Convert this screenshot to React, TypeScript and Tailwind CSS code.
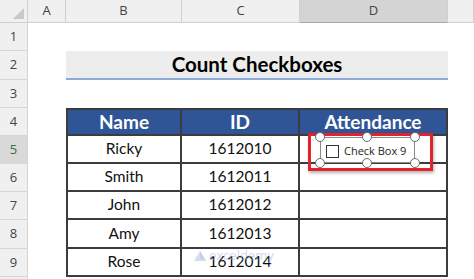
import React from 'react';

const people: [string, string][] = [
  ['Ricky', '1612010'],
  ['Smith', '1612011'],
  ['John', '1612012'],
  ['Amy', '1612013'],
  ['Rose', '1612014'],
];

const rowHead = 'flex items-center justify-center bg-[#f0f0f0] border-r border-b border-[#d6d6d6] text-[13px] text-[#444] font-["Open_Sans",sans-serif]';
const colHead = 'flex items-center justify-center bg-[#f0f0f0] border-r border-b border-[#d0d0d0] text-[13px] text-[#444] font-["Open_Sans",sans-serif]';
const cell = 'flex items-center justify-center border-r-2 border-b-2 border-[#3c3c3c] text-[15.5px] text-[#111]';
const head = 'bg-[#2f5597] text-white font-bold text-[19px] border-t-2';

const RowHeader: React.FC<{ n?: number; active?: boolean }> = ({ n, active }) => (
  <div className={active ? `${rowHead} !bg-[#d9d9d9] !text-[#3b6d4c]` : rowHead}>{n}</div>
);

const Handle: React.FC<{ x: number; y: number }> = ({ x, y }) => (
  <div
    className="absolute w-[10px] h-[10px] -ml-[5px] -mt-[5px] rounded-full border border-[#6a6a6a] bg-white"
    style={{ left: x, top: y }}
  />
);

export default function App() {
  return (
    <div className="relative w-[474px] h-[279px] overflow-hidden bg-white font-['Lato',sans-serif]">
      <div className="grid grid-cols-[28px_38px_116px_118px_148px_1fr] grid-rows-[23px_28px_29px_28px_28px_28px_28px_28px_29px_28px_28px]">
        {/* column headers */}
        <div className="relative bg-[#f0f0f0] border-r border-b border-[#d0d0d0]">
          <div className="absolute right-[3px] bottom-[3px] w-0 h-0 border-l-[11px] border-l-transparent border-b-[11px] border-b-[#c8c8c8]" />
        </div>
        <div className={colHead}>A</div>
        <div className={colHead}>B</div>
        <div className={colHead}>C</div>
        <div className={`${colHead} !bg-[#d4d4d4] !border-b-[#a8a8a8]`}>D</div>
        <div className={colHead}></div>

        {/* row 1 */}
        <RowHeader n={1} />
        <div className="col-span-5" />

        {/* row 2 */}
        <RowHeader n={2} />
        <div />
        <div className="col-span-3 flex items-center justify-center bg-[#ededed] border-b-2 border-[#8eaadb] text-[20.5px] font-bold text-black">
          Count Checkboxes
        </div>
        <div />

        {/* row 3 */}
        <RowHeader n={3} />
        <div className="col-span-5" />

        {/* row 4 */}
        <RowHeader n={4} />
        <div />
        <div className={`${cell} border-l-2 ${head}`}>Name</div>
        <div className={`${cell} ${head}`}>ID</div>
        <div className={`${cell} ${head}`}>Attendance</div>
        <div />

        {people.map(([name, id], i) => (
          <React.Fragment key={id}>
            <RowHeader n={i + 5} active={i === 0} />
            <div />
            <div className={`${cell} border-l-2`}>{name}</div>
            <div className={cell}>{id}</div>
            <div className={cell} />
            <div />
          </React.Fragment>
        ))}

        {/* row 10, only its top edge is in view */}
        <RowHeader />
        <div className="col-span-5" />
      </div>

      {/* watermark */}
      <div className="absolute left-[193px] top-[249px] flex items-center gap-[2px] opacity-50 pointer-events-none">
        <svg width="14" height="12" viewBox="0 0 14 12">
          <path d="M1 11 L7 1 L13 11 Z" fill="#a9bde0" />
          <path d="M7 1 L13 11 L7 8 Z" fill="#8aa5d4" />
        </svg>
        <span className="text-[13px] text-[#9fb5dc] font-['Open_Sans',sans-serif] leading-none">exceldemy</span>
      </div>

      {/* selected check box control */}
      <div className="absolute left-[308px] top-[133px] w-[125px] h-[38px] border-[3px] border-[#e1232b] shadow-[1px_2px_3px_rgba(0,0,0,0.3)]" />
      <div className="absolute left-[320px] top-[137px] w-[95px] h-[26px] border border-[#8a8a8a] bg-white" />
      <div className="absolute left-[326px] top-[145px] w-[13px] h-[13px] border border-[#333] bg-white" />
      <span className="absolute left-[344px] top-[143px] text-[11px] text-[#222] font-['Open_Sans',sans-serif] leading-[16px]">
        Check Box 9
      </span>
      <Handle x={320} y={137} />
      <Handle x={367} y={137} />
      <Handle x={415} y={137} />
      <Handle x={320} y={163} />
      <Handle x={367} y={163} />
      <Handle x={415} y={163} />
    </div>
  );
}
